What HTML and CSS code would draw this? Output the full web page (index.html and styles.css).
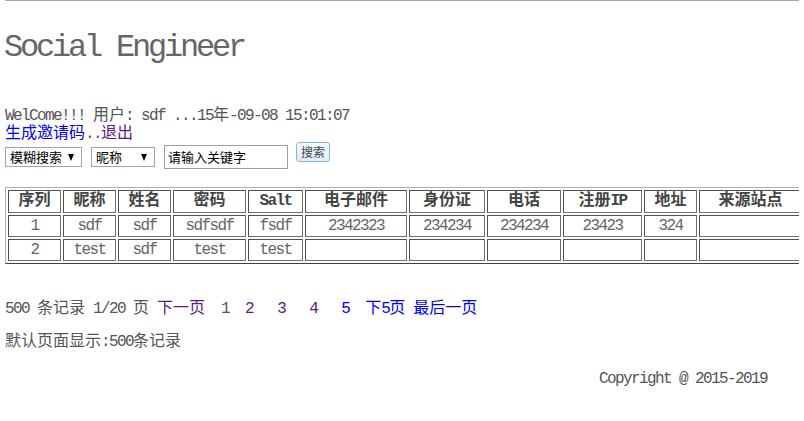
FILE: index.html
```html
<!DOCTYPE html>
<html>
<head>
<meta charset="utf-8">
<title>Social Engineer</title>
<link rel="stylesheet" href="styles.css">
</head>
<body>
<div class="topline"></div>
<h1 class="title">Social Engineer</h1>
<div class="line">WelCome!!! <span class="zh">用户</span>: sdf ...15<span class="zh">年</span>-09-08 15:01:07</div>
<div class="line"><a class="link zh" href="#">生成邀请码</a>..<a class="visited zh" href="#">退出</a></div>
<div class="search">
  <div class="select s1"><span class="opt">模糊搜索</span><span class="arrow"></span></div>
  <div class="select s2"><span class="opt">昵称</span><span class="arrow"></span></div>
  <div class="input">请输入关键字</div>
  <div class="btn">搜索</div>
</div>
<table class="data">
  <thead>
    <tr>
      <th class="c1 zh">序列</th>
      <th class="c2 zh">昵称</th>
      <th class="c3 zh">姓名</th>
      <th class="c4 zh">密码</th>
      <th class="c5">Salt</th>
      <th class="c6 zh">电子邮件</th>
      <th class="c7 zh">身份证</th>
      <th class="c8 zh">电话</th>
      <th class="c9"><span class="zh">注册</span>IP</th>
      <th class="c10 zh">地址</th>
      <th class="c11 zh">来源站点</th>
    </tr>
  </thead>
  <tbody>
    <tr>
      <td>1</td><td>sdf</td><td>sdf</td><td>sdfsdf</td><td>fsdf</td><td>2342323</td><td>234234</td><td>234234</td><td>23423</td><td>324</td><td></td>
    </tr>
    <tr>
      <td>2</td><td>test</td><td>sdf</td><td>test</td><td>test</td><td></td><td></td><td></td><td></td><td></td><td></td>
    </tr>
  </tbody>
</table>
<div class="line pager">500 <span class="zh">条记录</span> 1/20 <span class="zh">页</span> <a class="visited zh" href="#">下一页</a>&nbsp;&nbsp;1&nbsp;&nbsp;<a class="visited" href="#">2</a>&nbsp;&nbsp;&nbsp;<a class="visited" href="#">3</a>&nbsp;&nbsp;&nbsp;<a class="visited" href="#">4</a>&nbsp;&nbsp;&nbsp;<a class="link" href="#">5</a>&nbsp;&nbsp;<a class="link" href="#"><span class="zh">下</span>5<span class="zh">页</span></a> <a class="link zh" href="#">最后一页</a></div>
<div class="line default"><span class="zh">默认页面显示</span>:500<span class="zh">条记录</span></div>
<div class="line copyright">Copyright @ 2015-2019</div>
</body>
</html>
```
FILE: styles.css
```css
html {
  overflow: hidden;
}
body {
  margin: 0 5px;
  font-family: "Liberation Mono", "Noto Sans CJK SC", monospace;
  font-size: 16px;
  letter-spacing: -1.6px;
  color: #555;
  background: #fff;
}
.zh {
  letter-spacing: 0;
}
.topline {
  height: 1px;
  background: #a8a8a8;
  margin: 0 -5px;
}
.title {
  margin: 31px 0 0 -1px;
  font-size: 32px;
  line-height: 32px;
  height: 32px;
  font-weight: normal;
  letter-spacing: -3.2px;
  color: #666;
}
.line {
  height: 18px;
  line-height: 18px;
  white-space: nowrap;
}
.title + .line {
  margin-top: 43px;
}
a {
  text-decoration: none;
}
.link {
  color: #0000ff;
}
.visited {
  color: #551a8b;
}
.search {
  display: flex;
  align-items: flex-start;
  margin-top: -1px;
  height: 27px;
  font-family: "Noto Sans CJK SC", sans-serif;
  letter-spacing: 0;
  color: #000;
}
.select {
  box-sizing: border-box;
  height: 20px;
  margin-top: 5px;
  border: 1px solid #a5a5a5;
  display: flex;
  align-items: center;
  justify-content: space-between;
  padding: 0 7px 0 4px;
  font-size: 13px;
  line-height: 18px;
}
.s1 {
  width: 77px;
}
.s2 {
  width: 64px;
  margin-left: 9px;
}
.arrow {
  width: 0;
  height: 0;
  border-left: 3.5px solid transparent;
  border-right: 3.5px solid transparent;
  border-top: 7px solid #000;
  margin-top: 1px;
}
.input {
  box-sizing: border-box;
  width: 124px;
  height: 24px;
  margin: 3px 0 0 9px;
  border: 1px solid #a0a0a0;
  padding: 0 3px;
  font-size: 13px;
  line-height: 22px;
}
.btn {
  box-sizing: border-box;
  width: 34px;
  height: 20px;
  margin-left: 8px;
  border: 1px solid #82b5e6;
  border-radius: 3px;
  background: linear-gradient(#f6fbff, #dcedfb);
  color: #444;
  font-size: 12px;
  line-height: 17px;
  text-align: center;
}
.data {
  margin-top: 18px;
  width: 800px;
  table-layout: fixed;
  border-collapse: separate;
  border-spacing: 2px;
  border: 1px solid;
  border-color: #b0b0b0 #404040 #404040 #b0b0b0;
}
.data th,
.data td {
  box-sizing: border-box;
  border: 1px solid;
  border-color: #505050 #707070 #707070 #505050;
  padding: 0;
  text-align: center;
  white-space: nowrap;
  overflow: hidden;
}
.data th {
  height: 23px;
  line-height: 21px;
  font-weight: bold;
  color: #444;
}
.data td {
  height: 22px;
  line-height: 20px;
  color: #666;
}
.c1 { width: 53px; }
.c2 { width: 53px; }
.c3 { width: 53px; }
.c4 { width: 73px; }
.c5 { width: 55px; }
.c6 { width: 102px; }
.c7 { width: 76px; }
.c8 { width: 74px; }
.c9 { width: 79px; }
.c10 { width: 53px; }
.c11 { width: 103px; }
.pager {
  margin-top: 36px;
}
.default {
  margin-top: 15px;
}
.copyright {
  margin-top: 19px;
  text-align: right;
  padding-right: 32px;
}
```
